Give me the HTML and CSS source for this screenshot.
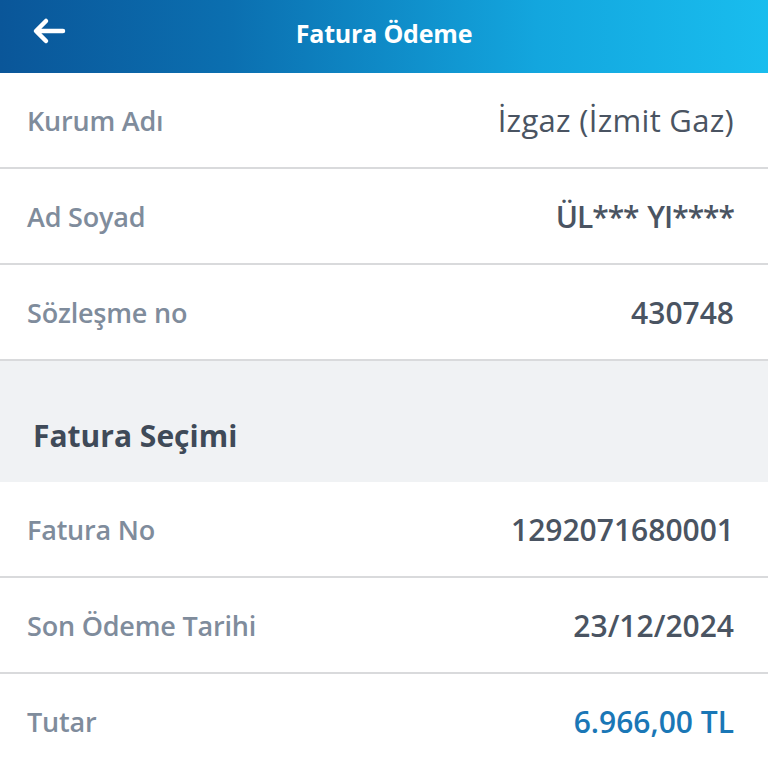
FILE: index.html
```html
<!DOCTYPE html>
<html lang="tr">
<head>
    <meta charset="UTF-8">
    <meta name="viewport" content="width=device-width, initial-scale=1.0">
    <title>Fatura Ödeme</title>
    <link rel="stylesheet" href="styles.css">
</head>
<body>
    <header class="topbar">
        <button class="back" aria-label="Geri">
            <svg width="34" height="28" viewBox="0 0 34 28">
                <path d="M31 14H5M14 4L4 14l10 10" fill="none" stroke="#fff" stroke-width="4.5" stroke-linecap="round" stroke-linejoin="round"/>
            </svg>
        </button>
        <h1>Fatura Ödeme</h1>
    </header>
    <main>
        <div class="row">
            <span class="label">Kurum Adı</span>
            <span class="value light">İzgaz (İzmit Gaz)</span>
        </div>
        <div class="row">
            <span class="label">Ad Soyad</span>
            <span class="value masked">ÜL*** YI****</span>
        </div>
        <div class="row">
            <span class="label">Sözleşme no</span>
            <span class="value">430748</span>
        </div>
        <div class="section">Fatura Seçimi</div>
        <div class="row">
            <span class="label">Fatura No</span>
            <span class="value">1292071680001</span>
        </div>
        <div class="row">
            <span class="label">Son Ödeme Tarihi</span>
            <span class="value">23/12/2024</span>
        </div>
        <div class="row last">
            <span class="label">Tutar</span>
            <span class="value amount">6.966,00 TL</span>
        </div>
    </main>
</body>
</html>
```

FILE: styles.css
```css
body {
    margin: 0;
    font-family: 'Open Sans', 'Noto Sans', sans-serif;
    background: #fff;
    color: #4a5563;
}

.topbar {
    position: relative;
    height: 73px;
    display: flex;
    align-items: center;
    justify-content: center;
    background: linear-gradient(90deg, #0a5699 0%, #0b6fb0 30%, #13a6de 70%, #19bdee 100%);
}

.topbar h1 {
    margin: 0 0 8px;
    color: #fff;
    font-size: 25px;
    font-weight: 700;
    letter-spacing: -0.2px;
}

.back {
    position: absolute;
    left: 32px;
    top: 17px;
    padding: 0;
    border: none;
    background: none;
    line-height: 0;
}

.row {
    height: 94px;
    display: flex;
    align-items: center;
    justify-content: space-between;
    padding: 0 34px 0 27px;
    border-bottom: 2px solid #d9dadc;
}

.row.last {
    border-bottom: none;
}

.label {
    color: #7f8c9c;
    font-size: 27px;
    font-weight: 600;
    letter-spacing: -0.2px;
}

.value {
    color: #4a5462;
    font-size: 30px;
    font-weight: 600;
}

.value.light {
    font-weight: 500;
    font-size: 31px;
    letter-spacing: 0.3px;
}

.value.masked {
    letter-spacing: -1px;
    word-spacing: 2px;
}

.value.amount {
    color: #1a77b6;
}

.section {
    height: 121px;
    box-sizing: border-box;
    display: flex;
    align-items: center;
    padding: 28px 33px 0;
    background: #f0f2f4;
    color: #3f4a58;
    font-size: 30px;
    font-weight: 700;
}
```
